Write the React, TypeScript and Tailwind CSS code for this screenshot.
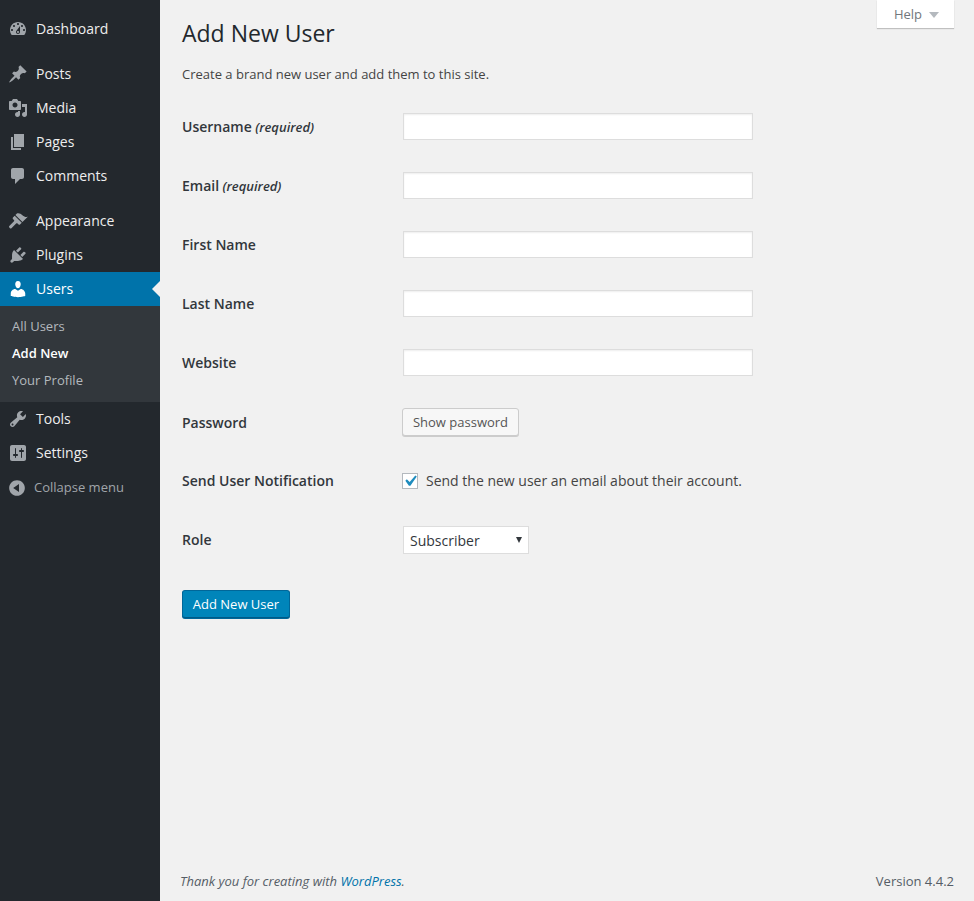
const menuIcons: Record<string, string> = {
  dashboard: "M3.76 16h12.48c1.1-1.37 1.76-3.11 1.76-5 0-4.42-3.58-8-8-8s-8 3.58-8 8c0 1.89.66 3.63 1.76 5zM10 4c.55 0 1 .45 1 1s-.45 1-1 1-1-.45-1-1 .45-1 1-1zM6 6c.55 0 1 .45 1 1s-.45 1-1 1-1-.45-1-1 .45-1 1-1zm8 0c.55 0 1 .45 1 1s-.45 1-1 1-1-.45-1-1 .45-1 1-1zm-5.37 5.55L12 7v6c0 1.1-.9 2-2 2s-2-.9-2-2c0-.57.24-1.08.63-1.45zM4 10c.55 0 1 .45 1 1s-.45 1-1 1-1-.45-1-1 .45-1 1-1zm12 0c.55 0 1 .45 1 1s-.45 1-1 1-1-.45-1-1 .45-1 1-1zm-5 3c0-.55-.45-1-1-1s-1 .45-1 1 .45 1 1 1 1-.45 1-1z",
  posts: "M10.44 3.02l1.82-1.82 6.36 6.35-1.83 1.82c-1.05-.68-2.48-.57-3.41.36l-.75.75c-.92.93-1.04 2.35-.35 3.41l-1.83 1.82-2.41-2.41-2.8 2.79c-.42.42-3.38 2.71-3.8 2.29s1.86-3.39 2.28-3.81l2.79-2.79L4.1 9.36l1.83-1.82c1.05.69 2.48.57 3.4-.36l.75-.75c.93-.92 1.05-2.35.36-3.41z",
  media: "M13 11V4c0-.55-.45-1-1-1h-1.67L9 1H5L3.67 3H2c-.55 0-1 .45-1 1v7c0 .55.45 1 1 1h10c.55 0 1-.45 1-1zM7 4.5c1.38 0 2.5 1.12 2.5 2.5S8.38 9.5 7 9.5 4.5 8.38 4.5 7 5.62 4.5 7 4.5zM14 6h5v10.5c0 1.38-1.12 2.5-2.5 2.5S14 17.88 14 16.5s1.12-2.5 2.5-2.5c.17 0 .34.02.5.05V9h-3V6zm-4 8.05V13h2v3.5c0 1.38-1.12 2.5-2.5 2.5S7 17.88 7 16.5 8.12 14 9.5 14c.17 0 .34.02.5.05z",
  pages: "M6 15V2h10v13H6zm-1 1h8v2H3V5h2v11z",
  comments: "M5 2h9c1.1 0 2 .9 2 2v7c0 1.1-.9 2-2 2h-2l-5 5v-5H5c-1.1 0-2-.9-2-2V4c0-1.1.9-2 2-2z",
  appearance: "M14.48 11.06L7.41 3.99l1.5-1.5c.5-.56 2.3-.47 3.51.32 1.21.8 1.43 1.28 2.91 2.1 1.18.64 2.45 1.26 4.45.85zM13.77 11.77L6.7 4.7 4.93 6.47c-.39.39-.39 1.02 0 1.41l1.06 1.06c.39.39.39 1.02 0 1.41L1.3 15.05c-.39.39-.39 1.02 0 1.41l.71.71c.39.39 1.02.39 1.41 0l4.7-4.69c.39-.39 1.02-.39 1.41 0l1.06 1.06c.39.39 1.02.39 1.41 0z",
  plugins: "M13.11 4.36L9.87 7.6 8 5.73l3.24-3.24c.35-.34 1.05-.2 1.56.32.52.51.66 1.21.31 1.55zm-8 1.77l.91-1.12 9.01 9.01-1.19.84c-.71.71-2.63 1.16-3.82 1.16H6.14L4.9 17.26c-.59.59-1.54.59-2.12 0-.59-.58-.59-1.53 0-2.12l1.24-1.24v-3.88c0-1.13.4-3.19 1.09-3.89zm7.26 3.97l3.24-3.24c.34-.35 1.04-.21 1.55.31.52.51.66 1.21.31 1.55l-3.24 3.25z",
  users: "M10 9.25c-2.27 0-2.73-3.44-2.73-3.44C7 4.02 7.82 2 9.97 2c2.16 0 2.98 2.02 2.71 3.81 0 0-.41 3.44-2.68 3.44zm0 2.57L12.72 10c2.39 0 4.52 2.33 4.52 4.53v2.49s-3.65 1.13-7.24 1.13c-3.65 0-7.24-1.13-7.24-1.13v-2.49c0-2.25 1.94-4.48 4.47-4.48z",
  tools: "M16.68 9.77c-1.34 1.34-3.3 1.67-4.95.99l-5.41 6.52c-.99.99-2.59.99-3.58 0s-.99-2.59 0-3.57l6.52-5.42c-.68-1.65-.35-3.61.99-4.95 1.28-1.28 3.12-1.62 4.72-1.06l-2.89 2.89 2.82 2.82 2.86-2.87c.53 1.58.18 3.39-1.08 4.65zM3.81 16.21c.4.39 1.04.39 1.43 0 .4-.4.4-1.04 0-1.43-.39-.4-1.03-.4-1.43 0-.39.39-.39 1.03 0 1.43z",
  settings: "M18 16V4c0-1.1-.9-2-2-2H4c-1.1 0-2 .9-2 2v12c0 1.1.9 2 2 2h12c1.1 0 2-.9 2-2zM8 11h1c.55 0 1 .45 1 1s-.45 1-1 1H8v1.5c0 .28-.22.5-.5.5s-.5-.22-.5-.5V13H6c-.55 0-1-.45-1-1s.45-1 1-1h1V5.5c0-.28.22-.5.5-.5s.5.22.5.5V11zm5-2h-1c-.55 0-1-.45-1-1s.45-1 1-1h1V5.5c0-.28.22-.5.5-.5s.5.22.5.5V7h1c.55 0 1 .45 1 1s-.45 1-1 1h-1v5.5c0 .28-.22.5-.5.5s-.5-.22-.5-.5V9z",
  collapse: "M10 2.16c4.33 0 7.84 3.51 7.84 7.84s-3.51 7.84-7.84 7.84S2.16 14.33 2.16 10 5.71 2.16 10 2.16zm2 11.72V6.12L6.18 9.97z",
}

function MenuIcon({ name, className }: { name: string; className: string }) {
  return (
    <svg viewBox="0 0 20 20" className={`h-5 w-5 shrink-0 fill-current ${className}`}>
      <path d={menuIcons[name]} />
    </svg>
  )
}

function MenuItem({ icon, label, active }: { icon: string; label: string; active?: boolean }) {
  return (
    <a className={`relative flex h-[34px] items-center text-sm ${active ? "bg-[#0073aa] text-white" : "text-[#eeeeee]"}`}>
      <span className="flex w-9 justify-center">
        <MenuIcon name={icon} className={active ? "text-white" : "text-[#a0a5aa]"} />
      </span>
      <span>{label}</span>
      {active && (
        <span className="absolute right-0 top-[9px] h-0 w-0 border-y-8 border-r-8 border-y-transparent border-r-[#f1f1f1]" />
      )}
    </a>
  )
}

function Sidebar() {
  return (
    <aside className="flex w-40 shrink-0 flex-col bg-[#23282d] pt-3">
      <MenuItem icon="dashboard" label="Dashboard" />
      <div className="h-[11px]" />
      <MenuItem icon="posts" label="Posts" />
      <MenuItem icon="media" label="Media" />
      <MenuItem icon="pages" label="Pages" />
      <MenuItem icon="comments" label="Comments" />
      <div className="h-[11px]" />
      <MenuItem icon="appearance" label="Appearance" />
      <MenuItem icon="plugins" label="Plugins" />
      <MenuItem icon="users" label="Users" active />
      <ul className="flex h-24 flex-col justify-center bg-[#32373c] text-[13px] text-[#b4b9be]">
        <li className="flex h-[27px] items-center pl-3">All Users</li>
        <li className="flex h-[27px] items-center pl-3 font-semibold text-white">Add New</li>
        <li className="flex h-[27px] items-center pl-3">Your Profile</li>
      </ul>
      <MenuItem icon="tools" label="Tools" />
      <MenuItem icon="settings" label="Settings" />
      <button className="flex h-9 items-center text-[13px] text-[#a0a5aa]">
        <span className="flex w-[34px] justify-center">
          <MenuIcon name="collapse" className="text-[#a0a5aa]" />
        </span>
        Collapse menu
      </button>
    </aside>
  )
}

function Field({ label, required }: { label: string; required?: boolean }) {
  return (
    <div className="flex h-[59px] items-center">
      <label className="w-[221px] text-sm font-semibold text-[#32373c]">
        {label}
        {required && <em className="text-[13px]"> (required)</em>}
      </label>
      <input type="text" className="h-[27px] w-[350px] border border-[#dddddd] bg-white shadow-[inset_0_1px_2px_rgba(0,0,0,0.07)]" />
    </div>
  )
}

function AddUserForm() {
  return (
    <form>
      <Field label="Username" required />
      <Field label="Email" required />
      <Field label="First Name" />
      <Field label="Last Name" />
      <Field label="Website" />
      <div className="flex h-[61px] items-start">
        <label className="mt-[21px] w-[220px] text-sm font-semibold text-[#32373c]">Password</label>
        <button type="button" className="mt-4 h-7 w-[117px] rounded-[3px] border border-[#cccccc] bg-[#f7f7f7] pt-[2px] text-[13px] text-[#555555] shadow-[0_1px_0_#cccccc]">
          Show password
        </button>
      </div>
      <div className="flex h-[56px] items-center">
        <label className="w-[220px] text-sm font-semibold text-[#32373c]">Send User Notification</label>
        <span className="flex h-4 w-4 items-center justify-center border border-[#b4b9be] bg-white">
          <svg viewBox="0 0 20 20" className="h-[22px] w-[22px] shrink-0 fill-[#1e8cbe]">
            <path d="M14.83 4.89l1.34.94-5.81 8.38H9.02L5.78 9.67l1.34-1.25 2.57 2.4z" />
          </svg>
        </span>
        <span className="ml-2 text-sm text-[#444444]">Send the new user an email about their account.</span>
      </div>
      <div className="flex h-[62px] items-center">
        <label className="w-[221px] text-sm font-semibold text-[#32373c]">Role</label>
        <div className="relative">
          <select className="block h-7 w-[126px] appearance-none border border-[#dddddd] bg-white pl-[6px] pt-[2px] text-sm text-[#32373c]" defaultValue="Subscriber">
            <option>Subscriber</option>
            <option>Contributor</option>
            <option>Author</option>
            <option>Editor</option>
            <option>Administrator</option>
          </select>
          <span className="pointer-events-none absolute right-[7px] top-[11px] h-0 w-0 border-x-[3px] border-t-[6px] border-x-transparent border-t-[#32373c]" />
        </div>
      </div>
      <button type="button" className="mt-[19px] h-7 w-[108px] rounded-[3px] border border-[#006799] border-b-[#005a87] bg-[#0085ba] pt-[2px] text-[13px] text-white shadow-[0_1px_0_#006799]">
        Add New User
      </button>
    </form>
  )
}

export default function App() {
  return (
    <div className="flex min-h-[901px] bg-[#f1f1f1] font-['Open_Sans',sans-serif]">
      <Sidebar />
      <main className="relative flex flex-1 flex-col pl-[22px] pr-5">
        <button className="absolute right-5 top-0 flex h-7 w-[77px] items-center justify-center gap-[7px] pt-[2px] pl-[2px] bg-white text-[13px] text-[#72777c] shadow-[0_1px_1px_rgba(0,0,0,0.2)]">
          Help
          <span className="h-0 w-0 border-x-[5px] border-t-[6px] border-x-transparent border-t-[#b4b9be]" />
        </button>
        <h1 className="mt-[17px] text-[23px] leading-[32px] text-[#23282d]">Add New User</h1>
        <p className="mt-[16px] mb-[14px] text-[13px] leading-[18px] text-[#444444]">Create a brand new user and add them to this site.</p>
        <AddUserForm />
        <footer className="mt-auto flex h-[38px] items-center justify-between text-[13px] text-[#555d66]">
          <span className="-ml-0.5 italic">
            Thank you for creating with <a className="text-[#0073aa]">WordPress</a>.
          </span>
          <span>Version 4.4.2</span>
        </footer>
      </main>
    </div>
  )
}
